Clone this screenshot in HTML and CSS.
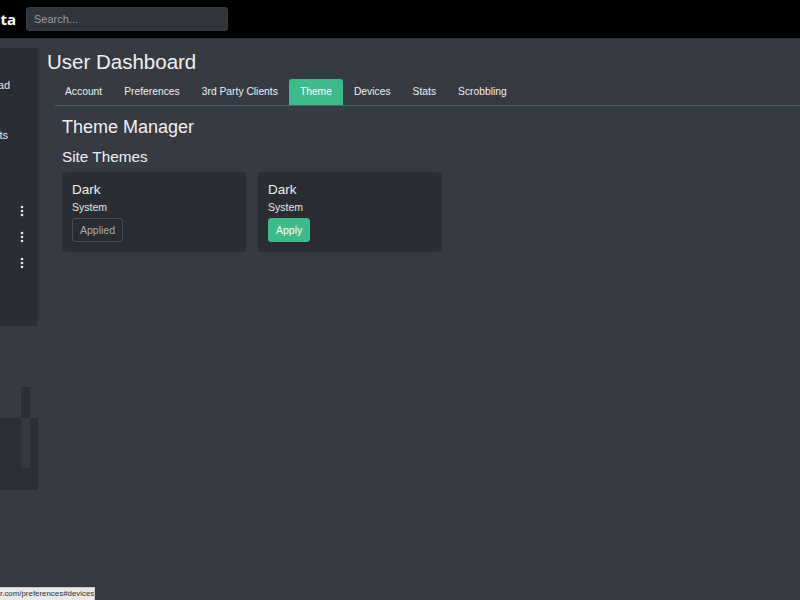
FILE: index.html
```html
<!DOCTYPE html>
<html>
<head>
<meta charset="utf-8">
<link rel="stylesheet" href="styles.css">
</head>
<body>
<header class="topbar">
  <div class="logo"><span>Beta</span></div>
  <input class="search" type="text" placeholder="Search...">
</header>
<div class="layout">
  <aside class="side">
    <div class="side-panel">
      <div class="side-item item1"><span>Download</span></div>
      <div class="side-item item2"><span>Playlists</span></div>
      <div class="side-dots">
        <div class="dot-row"><svg width="4" height="12" viewBox="0 0 4 12"><circle cx="2" cy="2" r="1.3" fill="#e6e6e6"/><circle cx="2" cy="6" r="1.3" fill="#e6e6e6"/><circle cx="2" cy="10" r="1.3" fill="#e6e6e6"/></svg></div>
        <div class="dot-row"><svg width="4" height="12" viewBox="0 0 4 12"><circle cx="2" cy="2" r="1.3" fill="#e6e6e6"/><circle cx="2" cy="6" r="1.3" fill="#e6e6e6"/><circle cx="2" cy="10" r="1.3" fill="#e6e6e6"/></svg></div>
        <div class="dot-row"><svg width="4" height="12" viewBox="0 0 4 12"><circle cx="2" cy="2" r="1.3" fill="#e6e6e6"/><circle cx="2" cy="6" r="1.3" fill="#e6e6e6"/><circle cx="2" cy="10" r="1.3" fill="#e6e6e6"/></svg></div>
      </div>
    </div>
    <div class="side-player">
      <div class="player-top"><div class="bar-top"></div></div>
      <div class="player-box"><div class="bar-low"></div></div>
    </div>
  </aside>
  <main class="main">
    <h1 class="title">User Dashboard</h1>
    <div class="tabs-wrap">
      <nav class="tabs">
        <a class="tab">Account</a>
        <a class="tab">Preferences</a>
        <a class="tab">3rd Party Clients</a>
        <a class="tab active">Theme</a>
        <a class="tab">Devices</a>
        <a class="tab">Stats</a>
        <a class="tab">Scrobbling</a>
      </nav>
      <section class="content">
        <h2 class="h-manager">Theme Manager</h2>
        <h3 class="h-site">Site Themes</h3>
        <div class="cards">
          <div class="card">
            <div class="card-name">Dark</div>
            <div class="card-sub">System</div>
            <button class="btn btn-applied">Applied</button>
          </div>
          <div class="card">
            <div class="card-name">Dark</div>
            <div class="card-sub">System</div>
            <button class="btn btn-apply">Apply</button>
          </div>
        </div>
      </section>
    </div>
  </main>
</div>
<div class="status">r.com/preferences#devices</div>
</body>
</html>
```
FILE: styles.css
```css
html, body {
  margin: 0;
  padding: 0;
  height: 100%;
}
body {
  background: #363a42;
  font-family: "Liberation Sans", Arial, sans-serif;
  color: #e8e8e8;
  overflow: hidden;
}
.topbar {
  height: 39px;
  background: #000;
  display: flex;
  align-items: center;
  border-bottom: 1px solid #2a2d33;
  box-sizing: border-box;
}
.logo {
  width: 16px;
  overflow: hidden;
  display: flex;
  justify-content: flex-end;
  margin-right: 10px;
  font-family: "Open Sans", sans-serif;
  font-weight: 700;
  font-size: 15px;
  color: #fff;
  white-space: nowrap;
}
.logo span { flex: none; }
.search {
  width: 202px;
  height: 24px;
  box-sizing: border-box;
  background: #30343b;
  border: 1px solid #3a3e45;
  border-radius: 3px;
  color: #ddd;
  font-family: "Liberation Sans", Arial, sans-serif;
  font-size: 11px;
  padding: 0 7px;
  outline: none;
}
.search::placeholder { color: #9a9da3; }
.layout {
  display: flex;
}
.side {
  width: 38px;
  flex: none;
  padding-top: 9px;
}
.side-panel {
  background: #2a2d33;
  height: 278px;
  border-right: 1px solid #30343a;
  box-sizing: border-box;
}
.side-item {
  display: flex;
  justify-content: flex-end;
  overflow: hidden;
  white-space: nowrap;
  font-size: 11px;
  color: #e6e6e6;
}
.side-item span { flex: none; }
.item1 { width: 10px; padding-top: 31px; }
.item2 { width: 8px; padding-top: 38px; }
.side-dots {
  padding-top: 64px;
  display: flex;
  flex-direction: column;
  gap: 14px;
  padding-left: 20px;
}
.dot-row { height: 12px; display: flex; }
.side-player {
  margin-top: 61px;
}
.player-top {
  height: 31px;
  display: flex;
  padding-left: 21px;
}
.bar-top {
  width: 9px;
  height: 31px;
  background: #2b2e34;
}
.player-box {
  height: 72px;
  background: #2b2f35;
  display: flex;
  padding-left: 21px;
}
.bar-low {
  width: 9px;
  height: 50px;
  background: #353940;
}
.main {
  flex: 1;
  padding-left: 9px;
}
.title {
  margin: 10px 0 0 0;
  font-weight: 400;
  font-size: 20.5px;
  line-height: 26px;
  color: #f0f0f0;
}
.tabs-wrap {
  margin-left: 8px;
  margin-top: 4px;
}
.tabs {
  display: flex;
  border-bottom: 1px solid #3f6e5e;
  height: 26px;
  align-items: flex-end;
}
.tab {
  font-size: 10.3px;
  color: #f0f0f0;
  padding: 0 11px 0 11px;
  height: 26px;
  line-height: 25px;
  box-sizing: border-box;
  border-radius: 3px 3px 0 0;
  cursor: pointer;
}
.tab:first-child { padding-left: 10px; }
.tab.active {
  background: #3dbb8b;
  color: #fff;
  padding: 0 11px;
}
.content {
  padding-left: 7px;
}
.h-manager {
  margin: 10px 0 0 0;
  font-weight: 400;
  font-size: 18px;
  line-height: 22px;
  color: #f0f0f0;
}
.h-site {
  margin: 9px 0 0 0;
  font-weight: 400;
  font-size: 15.3px;
  line-height: 19px;
  color: #f0f0f0;
}
.cards {
  display: flex;
  gap: 12px;
  margin-top: 6px;
}
.card {
  width: 184px;
  height: 80px;
  box-sizing: border-box;
  background: #292c33;
  border-radius: 4px;
  padding: 10px 10px;
}
.card-name {
  font-size: 13.5px;
  line-height: 16px;
  color: #f0f0f0;
}
.card-sub {
  font-size: 10.5px;
  line-height: 14px;
  margin-top: 2px;
  color: #e6e6e6;
}
.btn {
  margin-top: 4px;
  height: 24px;
  font-family: "Liberation Sans", Arial, sans-serif;
  font-size: 10.5px;
  border-radius: 3px;
  padding: 0 7px;
  cursor: pointer;
}
.btn-applied {
  background: transparent;
  border: 1px solid #4a4e55;
  color: #a9acb1;
}
.btn-apply {
  background: #3dbb8b;
  border: 1px solid #3dbb8b;
  color: #fff;
  padding: 0 7px;
}
.status {
  position: absolute;
  left: 0;
  bottom: 0;
  height: 13px;
  width: 95px;
  background: #e9e9e9;
  border: 1px solid #c8c8c8;
  border-left: none;
  border-bottom: none;
  box-sizing: border-box;
  font-size: 7.9px;
  line-height: 12px;
  color: #333;
  white-space: nowrap;
  overflow: hidden;
}
```
